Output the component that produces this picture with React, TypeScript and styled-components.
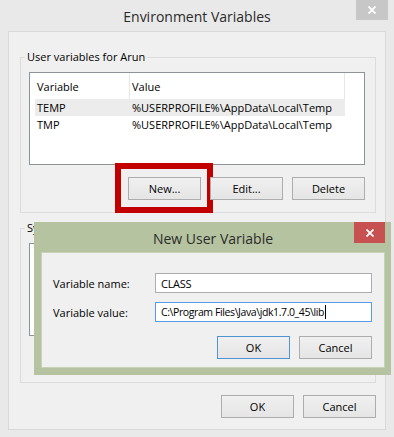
import styled, { createGlobalStyle } from "styled-components";

const GlobalStyle = createGlobalStyle`
  html, body {
    margin: 0;
    padding: 0;
  }
  body {
    width: 394px;
    height: 437px;
    overflow: hidden;
    background: #e9e9e9;
    font-family: "Open Sans", "Noto Sans", sans-serif;
    font-size: 11px;
    color: #000;
  }
  * {
    box-sizing: border-box;
  }
`;

const Window = styled.div`
  position: relative;
  width: 394px;
  height: 437px;
  display: flex;
  flex-direction: column;
  background: #e9e9e9;
  padding-bottom: 8px;
`;

const TitleBar = styled.div<{ height: number }>`
  position: relative;
  height: ${({ height }) => height}px;
  flex-shrink: 0;
  display: flex;
  align-items: center;
  justify-content: center;
`;

const Title = styled.div`
  font-size: 14px;
  color: #2b2b2b;
  padding-top: 2px;
`;

const CloseButton = styled.div<{ bg: string; right: number; w: number; h: number }>`
  position: absolute;
  top: 0;
  right: ${({ right }) => right}px;
  width: ${({ w }) => w}px;
  height: ${({ h }) => h}px;
  background: ${({ bg }) => bg};
  display: flex;
  align-items: center;
  justify-content: center;
`;

const Client = styled.div`
  flex: 1;
  margin: 0 8px;
  border: 1px solid #d9d9d9;
  background: #f0f0f0;
  display: flex;
  flex-direction: column;
  padding: 17px 9px 11px 11px;
`;

const Group = styled.fieldset<{ top: number }>`
  margin: ${({ top }) => top}px 0 0 0;
  border: 1px solid #dcdcdc;
  padding: 7px 10px 12px 8px;
  min-width: 0;
`;

const Legend = styled.legend`
  margin-left: -4px;
  padding: 0 2px;
  line-height: 16px;
`;

const List = styled.div`
  height: 93px;
  border: 1px solid #8e9299;
  background: #fff;
  padding: 0 19px 0 5px;
`;

const HeaderRow = styled.div`
  display: grid;
  grid-template-columns: 95px 215px;
  height: 26px;
`;

const HeaderCell = styled.div`
  display: flex;
  align-items: center;
  padding-left: 2px;
  border-right: 1px solid #e6e6e6;
`;

const Row = styled.div<{ selected?: boolean }>`
  display: grid;
  grid-template-columns: 95px 215px;
  height: 17px;
  align-items: center;
  background: ${({ selected }) => (selected ? "#ececec" : "transparent")};
`;

const Cell = styled.div`
  padding-left: 2px;
  white-space: nowrap;
`;

const ButtonRow = styled.div<{ top: number; gap: number; hidden?: boolean }>`
  display: flex;
  justify-content: flex-end;
  gap: ${({ gap }) => gap}px;
  margin-top: ${({ top }) => top}px;
  visibility: ${({ hidden }) => (hidden ? "hidden" : "visible")};
`;

const Button = styled.div<{ focused?: boolean }>`
  position: relative;
  width: 73px;
  height: 23px;
  display: flex;
  align-items: center;
  justify-content: center;
  border: 1px solid ${({ focused }) => (focused ? "#4f95d6" : "#adadad")};
  background: linear-gradient(#f0f0f0, #e5e5e5);
  color: #000;
`;

const Highlight = styled.div`
  position: absolute;
  left: -14px;
  top: -15px;
  right: -13px;
  bottom: -14px;
  border: 6px solid #c30000;
  pointer-events: none;
`;

const Dialog = styled.div`
  position: absolute;
  left: 34px;
  top: 222px;
  width: 357px;
  height: 153px;
  background: #b5c3a0;
  display: flex;
  flex-direction: column;
  padding: 0 6px 7px 7px;
`;

const DialogBody = styled.div`
  flex: 1;
  background: #f0f0f0;
  border: 1px solid #c8d2b9;
  padding: 20px 12px 0 11px;
`;

const Form = styled.div`
  display: grid;
  grid-template-columns: 102px 217px;
  row-gap: 9px;
  align-items: center;
`;

const Field = styled.div<{ focused?: boolean }>`
  height: 20px;
  border: 1px solid ${({ focused }) => (focused ? "#569de5" : "#abadb3")};
  background: #fff;
  padding-left: 5px;
  display: flex;
  align-items: center;
  white-space: nowrap;
  font-size: ${({ focused }) => (focused ? "10.5px" : "11px")};
  letter-spacing: ${({ focused }) => (focused ? "-0.4px" : "-0.3px")};
`;

const Caret = styled.span`
  display: inline-block;
  width: 1px;
  height: 14px;
  margin-left: 1px;
  background: #000;
`;

const CloseX = () => (
  <svg width="8" height="8" viewBox="0 0 8 8">
    <path d="M0.5 0.5 L7.5 7.5 M7.5 0.5 L0.5 7.5" stroke="#fff" strokeWidth="1.8" />
  </svg>
);

export default function App() {
  return (
    <>
      <GlobalStyle />
      <Window>
        <TitleBar height={31}>
          <Title>Environment Variables</Title>
          <CloseButton bg="#c7c7c7" right={6} w={32} h={20}>
            <CloseX />
          </CloseButton>
        </TitleBar>
        <Client>
          <Group top={0}>
            <Legend>User variables for Arun</Legend>
            <List>
              <HeaderRow>
                <HeaderCell>Variable</HeaderCell>
                <HeaderCell>Value</HeaderCell>
              </HeaderRow>
              <Row selected>
                <Cell>TEMP</Cell>
                <Cell>%USERPROFILE%\AppData\Local\Temp</Cell>
              </Row>
              <Row>
                <Cell>TMP</Cell>
                <Cell>%USERPROFILE%\AppData\Local\Temp</Cell>
              </Row>
            </List>
            <ButtonRow top={12} gap={9}>
              <Button>
                New...
                <Highlight />
              </Button>
              <Button>Edit...</Button>
              <Button>Delete</Button>
            </ButtonRow>
          </Group>
          <Group top={7}>
            <Legend>System variables</Legend>
            <List />
            <ButtonRow top={11} gap={9} hidden>
              <Button />
              <Button />
              <Button />
            </ButtonRow>
          </Group>
          <ButtonRow top={12} gap={9}>
            <Button>OK</Button>
            <Button>Cancel</Button>
          </ButtonRow>
        </Client>

        <Dialog>
          <TitleBar height={30}>
            <Title>New User Variable</Title>
            <CloseButton bg="#c75050" right={0} w={31} h={21}>
              <CloseX />
            </CloseButton>
          </TitleBar>
          <DialogBody>
            <Form>
              <span>Variable name:</span>
              <Field>CLASS</Field>
              <span>Variable value:</span>
              <Field focused>
                C:\Program Files\Java\jdk1.7.0_45\lib
                <Caret />
              </Field>
            </Form>
            <ButtonRow top={14} gap={9}>
              <Button focused>OK</Button>
              <Button>Cancel</Button>
            </ButtonRow>
          </DialogBody>
        </Dialog>
      </Window>
    </>
  );
}
